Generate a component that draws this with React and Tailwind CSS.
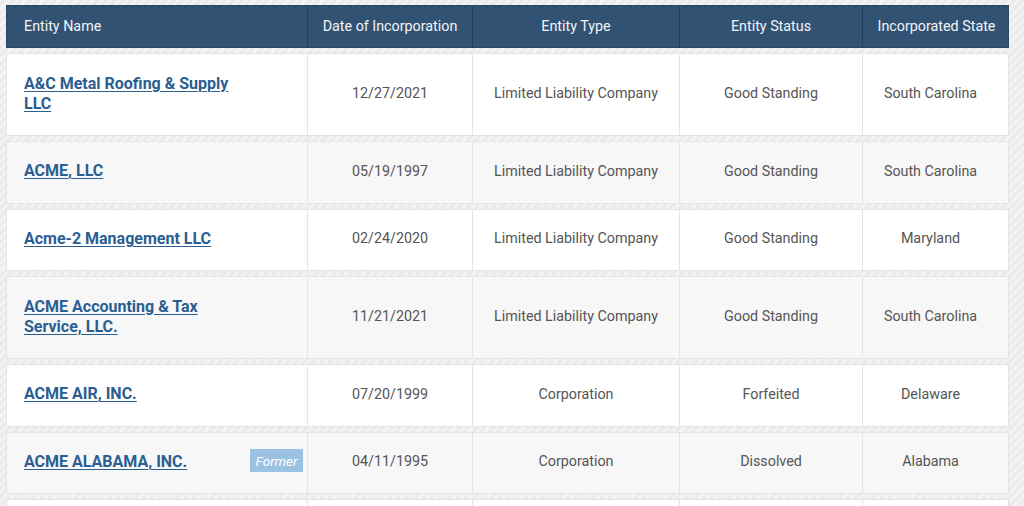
import React from "react";

const rows = [
  { name: "A&C Metal Roofing & Supply LLC", date: "12/27/2021", type: "Limited Liability Company", status: "Good Standing", state: "South Carolina", tall: true },
  { name: "ACME, LLC", date: "05/19/1997", type: "Limited Liability Company", status: "Good Standing", state: "South Carolina" },
  { name: "Acme-2 Management LLC", date: "02/24/2020", type: "Limited Liability Company", status: "Good Standing", state: "Maryland" },
  { name: "ACME Accounting & Tax Service, LLC.", date: "11/21/2021", type: "Limited Liability Company", status: "Good Standing", state: "South Carolina", tall: true },
  { name: "ACME AIR, INC.", date: "07/20/1999", type: "Corporation", status: "Forfeited", state: "Delaware" },
  { name: "ACME ALABAMA, INC.", date: "04/11/1995", type: "Corporation", status: "Dissolved", state: "Alabama", former: true },
  { name: "", date: "", type: "", status: "", state: "" },
];

const cols = "grid grid-cols-[301px_165px_207px_183px_147px]";

export default function App() {
  return (
    <div
      className="h-screen w-full overflow-hidden bg-[repeating-linear-gradient(-45deg,#f3f3f3_0px,#f3f3f3_3px,#ebebeb_3px,#ebebeb_6px)] pl-[6px] pt-[5px]"
      style={{ fontFamily: "Roboto, 'Liberation Sans', sans-serif" }}
    >
      <div className="flex w-[1003px] flex-col gap-[5px]">
        <div className={`${cols} h-[43px] border border-[#284864] bg-[#325273] text-[14.3px] text-[#f2f4f7]`}>
          <div className="flex items-center border-r border-[#223f5a] pl-[17px]">Entity Name</div>
          <div className="flex items-center justify-center border-r border-[#223f5a]">Date of Incorporation</div>
          <div className="flex items-center justify-center border-r border-[#223f5a]">Entity Type</div>
          <div className="flex items-center justify-center border-r border-[#223f5a]">Entity Status</div>
          <div className="flex items-center justify-center">Incorporated State</div>
        </div>
        {rows.map((r, i) => (
          <div
            key={i}
            className={`${cols} shrink-0 border border-[#e4e4e4] text-[14.3px] text-[#555555] ${r.tall ? "h-[83px]" : "h-[62.5px]"} ${i % 2 === 1 ? "bg-[#f7f7f7]" : "bg-white"}`}
          >
            <div className="flex items-center justify-between border-r border-[#e4e4e4] pb-[2px] pl-[17px] pr-[4px]">
              <a
                href="#"
                className="max-w-[226px] text-[16px] font-bold leading-[20px] text-[#2b5e91] underline decoration-[1px] underline-offset-[2px]"
              >
                {r.name}
              </a>
              {r.former && (
                <span className="mb-[2px] flex h-[23px] w-[53px] items-center justify-center bg-[#9cc2e3] text-[13.5px] italic text-white">
                  Former
                </span>
              )}
            </div>
            <div className="flex items-center justify-center border-r border-[#e4e4e4] pb-[2px]">{r.date}</div>
            <div className="flex items-center justify-center border-r border-[#e4e4e4] pb-[2px]">{r.type}</div>
            <div className="flex items-center justify-center border-r border-[#e4e4e4] pb-[2px]">{r.status}</div>
            <div className="flex items-center justify-center pb-[2px] pr-[12px]">{r.state}</div>
          </div>
        ))}
      </div>
    </div>
  );
}
